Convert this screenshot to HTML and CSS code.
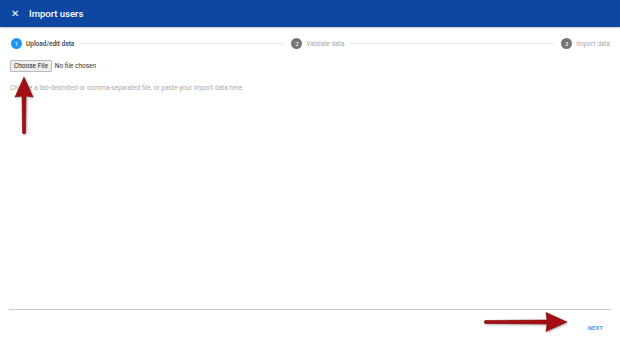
FILE: index.html
```html
<!DOCTYPE html>
<html>
<head>
<meta charset="utf-8">
<link rel="stylesheet" href="styles.css">
</head>
<body>
<div class="page">
  <header class="bar">
    <span class="close">&#x2715;</span>
    <span class="title">Import users</span>
  </header>
  <main class="main">
    <div class="stepper">
      <div class="step active"><span class="dot">1</span><span class="label">Upload/edit data</span></div>
      <div class="line"></div>
      <div class="step"><span class="dot">2</span><span class="label">Validate data</span></div>
      <div class="line"></div>
      <div class="step"><span class="dot">3</span><span class="label">Import data</span></div>
    </div>
    <div class="filerow">
      <span class="filebtn">Choose File</span>
      <span class="filename">No file chosen</span>
    </div>
    <div class="hint">Choose a tab-delimited or comma-separated file, or paste your import data here</div>
  </main>
  <footer class="foot">
    <span class="next">NEXT</span>
  </footer>
  <svg class="arrow arrow-up" width="24" height="62" viewBox="0 0 24 62">
    <path d="M12 1 L21 21 L14 20 L13.5 57 Q12 59 10.5 57 L10 20 L3 21 Z" fill="#a30f12" stroke="#7d0a0c" stroke-width="0.6"/>
  </svg>
  <svg class="arrow arrow-right" width="86" height="22" viewBox="0 0 86 22">
    <path d="M2 9.5 L64 9 L63 1.5 L84 11 L63 20.5 L64 13 L2 12.5 Q0.5 11 2 9.5 Z" fill="#a30f12" stroke="#7d0a0c" stroke-width="0.6"/>
  </svg>
</div>
</body>
</html>
```

FILE: styles.css
```css
html, body {
  margin: 0;
  padding: 0;
  background: #fff;
}
.page {
  position: relative;
  width: 620px;
  height: 345px;
  display: flex;
  flex-direction: column;
  font-family: Roboto, "Liberation Sans", sans-serif;
  color: #333;
}
.bar {
  height: 27px;
  background: #0d47a1;
  display: flex;
  align-items: center;
  padding-left: 11px;
  gap: 10px;
  color: #fff;
  box-shadow: 0 1px 2px rgba(0,0,0,0.25);
}
.close {
  font-size: 9.5px;
  line-height: 1;
}
.title {
  font-size: 9.5px;
  font-weight: 500;
}
.main {
  flex: 1;
  padding: 0 10px;
}
.stepper {
  display: flex;
  align-items: center;
  margin-top: 11px;
  height: 11px;
}
.step {
  display: flex;
  align-items: center;
  gap: 4px;
  padding-left: 1px;
}
.dot {
  width: 11px;
  height: 11px;
  border-radius: 50%;
  background: #757575;
  color: #fff;
  font-size: 6px;
  display: flex;
  align-items: center;
  justify-content: center;
  line-height: 1;
}
.step.active .dot {
  background: #2196f3;
}
.label {
  font-size: 6.5px;
  color: #a8a8a8;
}
.step.active .label {
  color: #424242;
  font-weight: 500;
}
.line {
  flex: 1;
  height: 1px;
  background: #e6e6e6;
  margin: 0 6px;
}
.filerow {
  display: flex;
  align-items: center;
  gap: 3px;
  margin-top: 11px;
}
.filebtn {
  font-size: 6.5px;
  color: #222;
  background: #eee;
  border: 1px solid #bbb;
  border-radius: 1px;
  padding: 1.5px 3px;
  line-height: 7px;
}
.filename {
  font-size: 6.5px;
  color: #333;
}
.hint {
  margin-top: 12px;
  font-size: 6.6px;
  color: #aaa;
}
.foot {
  margin: 0 9px;
  border-top: 1px solid #ccc;
  height: 35px;
  display: flex;
  justify-content: flex-end;
  align-items: center;
  padding-right: 8px;
}
.next {
  font-size: 6px;
  font-weight: 700;
  color: #42a5f5;
}
.arrow {
  position: absolute;
  filter: drop-shadow(1px 1px 1px rgba(0,0,0,0.3));
}
.arrow-up {
  left: 12px;
  top: 76px;
}
.arrow-right {
  left: 483px;
  top: 311px;
}
```
